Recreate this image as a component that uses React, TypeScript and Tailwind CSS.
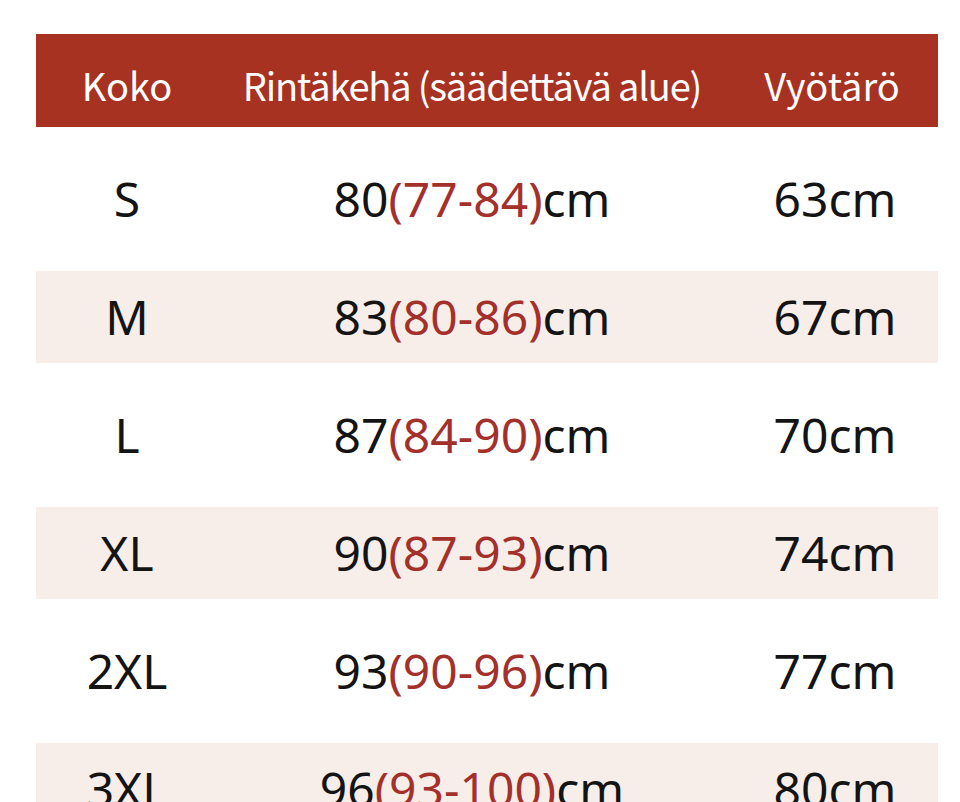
const rows = [
  { size: "S", base: "80", range: "(77-84)", waist: "63cm" },
  { size: "M", base: "83", range: "(80-86)", waist: "67cm" },
  { size: "L", base: "87", range: "(84-90)", waist: "70cm" },
  { size: "XL", base: "90", range: "(87-93)", waist: "74cm" },
  { size: "2XL", base: "93", range: "(90-96)", waist: "77cm" },
  { size: "3XL", base: "96", range: "(93-100)", waist: "80cm" },
];

export default function App() {
  return (
    <div
      className="h-[802px] overflow-hidden bg-white pt-[34px]"
      style={{ fontFamily: '"Noto Sans", "Open Sans", sans-serif' }}
    >
      <div className="ml-[36px] w-[902px]">
        <div
          className="grid h-[93px] grid-cols-[182px_508px_212px] items-center bg-[#a83222] pt-[8px] text-[38px] text-white"
          style={{ fontFamily: '"Noto Sans CJK SC", "Noto Sans", sans-serif' }}
        >
          <div className="text-center">Koko</div>
          <div className="text-center tracking-[-1.2px]">Rintäkehä (säädettävä alue)</div>
          <div className="text-center">Vyötärö</div>
        </div>
        {rows.map((r, i) => (
          <div
            key={r.size}
            className={
              i % 2 === 0
                ? "grid h-[144px] grid-cols-[182px_508px_212px] items-center bg-white text-[48px] text-[#141414]"
                : "grid h-[92px] grid-cols-[182px_508px_212px] items-center bg-[#f7eeea] text-[48px] text-[#141414]"
            }
          >
            <div className="text-center">{r.size}</div>
            <div className="text-center">
              {r.base}
              <span className="text-[#a4302c]">{r.range}</span>cm
            </div>
            <div className="pl-[6px] text-center">{r.waist}</div>
          </div>
        ))}
      </div>
    </div>
  );
}
